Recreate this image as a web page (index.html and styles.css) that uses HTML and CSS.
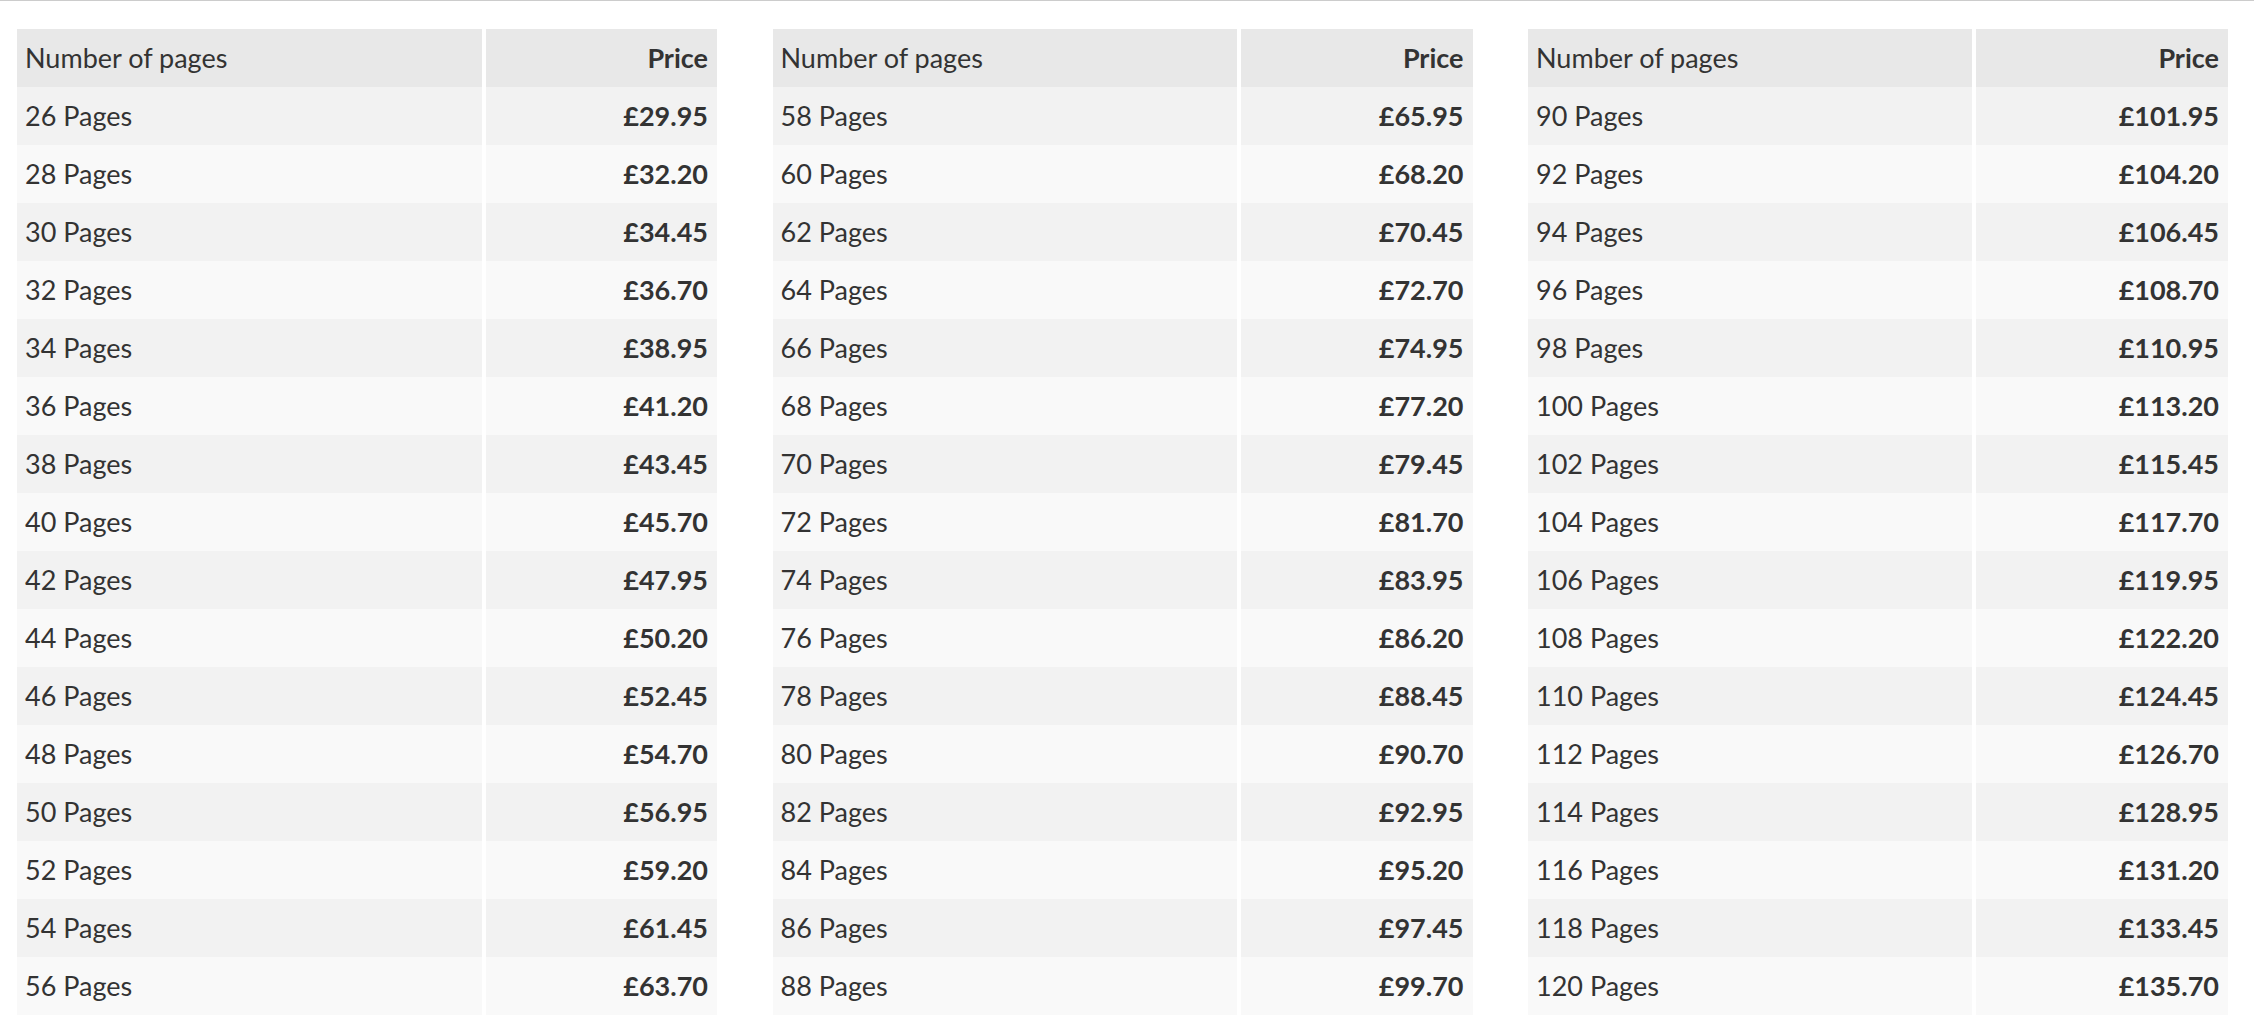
FILE: index.html
```html
<!DOCTYPE html>
<html lang="en">
<head>
<meta charset="utf-8">
<title>Prices</title>
<link rel="stylesheet" href="styles.css">
</head>
<body>
<div class="page">
  <table class="prices">
    <thead><tr><th class="pages">Number of pages</th><th class="price">Price</th></tr></thead>
    <tbody>
      <tr><td class="pages">26 Pages</td><td class="price">£29.95</td></tr>
      <tr><td class="pages">28 Pages</td><td class="price">£32.20</td></tr>
      <tr><td class="pages">30 Pages</td><td class="price">£34.45</td></tr>
      <tr><td class="pages">32 Pages</td><td class="price">£36.70</td></tr>
      <tr><td class="pages">34 Pages</td><td class="price">£38.95</td></tr>
      <tr><td class="pages">36 Pages</td><td class="price">£41.20</td></tr>
      <tr><td class="pages">38 Pages</td><td class="price">£43.45</td></tr>
      <tr><td class="pages">40 Pages</td><td class="price">£45.70</td></tr>
      <tr><td class="pages">42 Pages</td><td class="price">£47.95</td></tr>
      <tr><td class="pages">44 Pages</td><td class="price">£50.20</td></tr>
      <tr><td class="pages">46 Pages</td><td class="price">£52.45</td></tr>
      <tr><td class="pages">48 Pages</td><td class="price">£54.70</td></tr>
      <tr><td class="pages">50 Pages</td><td class="price">£56.95</td></tr>
      <tr><td class="pages">52 Pages</td><td class="price">£59.20</td></tr>
      <tr><td class="pages">54 Pages</td><td class="price">£61.45</td></tr>
      <tr><td class="pages">56 Pages</td><td class="price">£63.70</td></tr>
    </tbody>
  </table>
  <table class="prices">
    <thead><tr><th class="pages">Number of pages</th><th class="price">Price</th></tr></thead>
    <tbody>
      <tr><td class="pages">58 Pages</td><td class="price">£65.95</td></tr>
      <tr><td class="pages">60 Pages</td><td class="price">£68.20</td></tr>
      <tr><td class="pages">62 Pages</td><td class="price">£70.45</td></tr>
      <tr><td class="pages">64 Pages</td><td class="price">£72.70</td></tr>
      <tr><td class="pages">66 Pages</td><td class="price">£74.95</td></tr>
      <tr><td class="pages">68 Pages</td><td class="price">£77.20</td></tr>
      <tr><td class="pages">70 Pages</td><td class="price">£79.45</td></tr>
      <tr><td class="pages">72 Pages</td><td class="price">£81.70</td></tr>
      <tr><td class="pages">74 Pages</td><td class="price">£83.95</td></tr>
      <tr><td class="pages">76 Pages</td><td class="price">£86.20</td></tr>
      <tr><td class="pages">78 Pages</td><td class="price">£88.45</td></tr>
      <tr><td class="pages">80 Pages</td><td class="price">£90.70</td></tr>
      <tr><td class="pages">82 Pages</td><td class="price">£92.95</td></tr>
      <tr><td class="pages">84 Pages</td><td class="price">£95.20</td></tr>
      <tr><td class="pages">86 Pages</td><td class="price">£97.45</td></tr>
      <tr><td class="pages">88 Pages</td><td class="price">£99.70</td></tr>
    </tbody>
  </table>
  <table class="prices">
    <thead><tr><th class="pages">Number of pages</th><th class="price">Price</th></tr></thead>
    <tbody>
      <tr><td class="pages">90 Pages</td><td class="price">£101.95</td></tr>
      <tr><td class="pages">92 Pages</td><td class="price">£104.20</td></tr>
      <tr><td class="pages">94 Pages</td><td class="price">£106.45</td></tr>
      <tr><td class="pages">96 Pages</td><td class="price">£108.70</td></tr>
      <tr><td class="pages">98 Pages</td><td class="price">£110.95</td></tr>
      <tr><td class="pages">100 Pages</td><td class="price">£113.20</td></tr>
      <tr><td class="pages">102 Pages</td><td class="price">£115.45</td></tr>
      <tr><td class="pages">104 Pages</td><td class="price">£117.70</td></tr>
      <tr><td class="pages">106 Pages</td><td class="price">£119.95</td></tr>
      <tr><td class="pages">108 Pages</td><td class="price">£122.20</td></tr>
      <tr><td class="pages">110 Pages</td><td class="price">£124.45</td></tr>
      <tr><td class="pages">112 Pages</td><td class="price">£126.70</td></tr>
      <tr><td class="pages">114 Pages</td><td class="price">£128.95</td></tr>
      <tr><td class="pages">116 Pages</td><td class="price">£131.20</td></tr>
      <tr><td class="pages">118 Pages</td><td class="price">£133.45</td></tr>
      <tr><td class="pages">120 Pages</td><td class="price">£135.70</td></tr>
    </tbody>
  </table>
</div>
</body>
</html>
```

FILE: styles.css
```css
html, body {
  margin: 0;
  padding: 0;
  background: #ffffff;
}

body {
  border-top: 1px solid #cccccc;
  font-family: Lato, "Noto Sans", "Liberation Sans", sans-serif;
  font-size: 27px;
  color: #333333;
}

.page {
  display: flex;
  gap: 55.5px;
  padding: 28px 0 0 17px;
}

.prices {
  width: 700px;
  border-collapse: collapse;
  flex: none;
}

.prices th,
.prices td {
  height: 58px;
  padding: 0 9px 2px 8px;
  box-sizing: border-box;
  vertical-align: middle;
  line-height: 1;
}

.prices thead tr {
  background: #e8e8e8;
}

.prices tbody tr:nth-child(odd) {
  background: #f2f2f2;
}

.prices tbody tr:nth-child(even) {
  background: #f9f9f9;
}

.prices .pages {
  text-align: left;
  font-weight: 400;
}

.prices .price {
  text-align: right;
  font-weight: 700;
  padding-left: 15px;
  border-left: 4px solid #ffffff;
}
```
